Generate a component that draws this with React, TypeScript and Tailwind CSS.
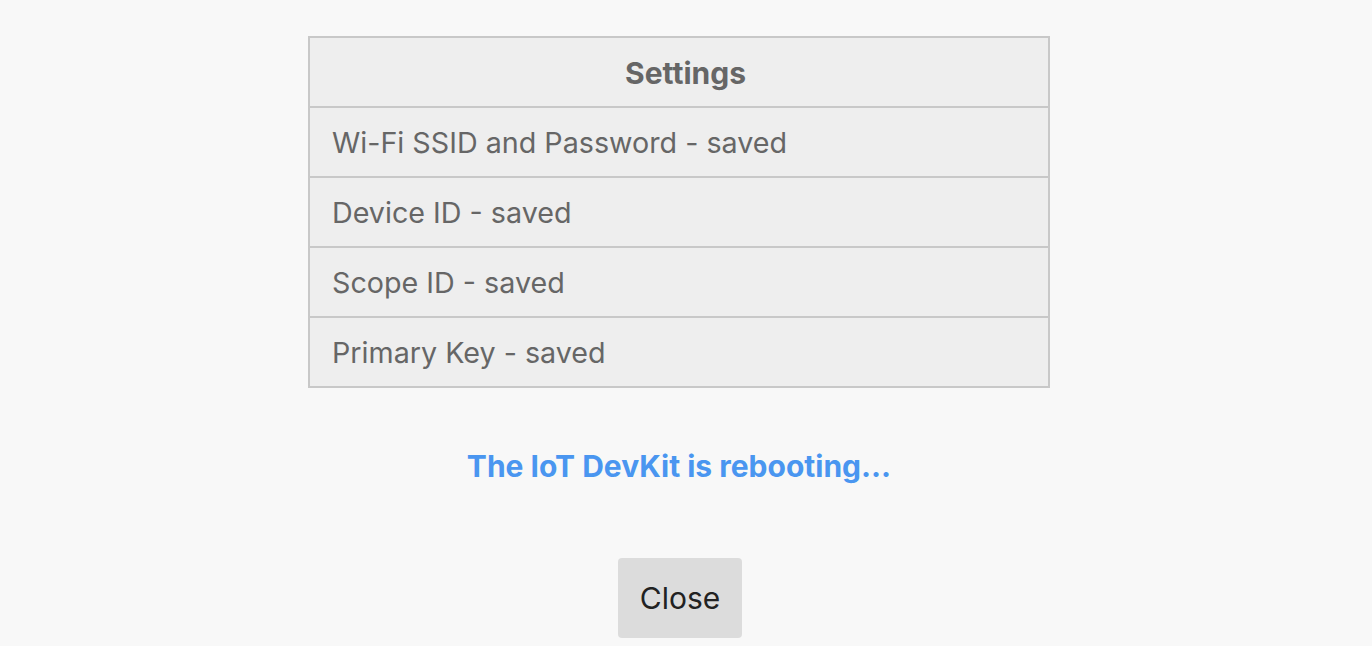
const rows = [
  'Wi-Fi SSID and Password - saved',
  'Device ID - saved',
  'Scope ID - saved',
  'Primary Key - saved',
]

export default function App() {
  return (
    <div className="min-h-screen bg-[#f8f8f8] font-['Inter',sans-serif] text-[#666]">
      <div className="flex flex-col items-center pt-[36px] pr-[14px]">
        <div className="w-[742px] border-2 border-[#c8c8c8] bg-[#eeeeee]">
          <div className="flex h-[68px] items-center justify-center pl-[13px] pt-[2px] text-[30px] font-bold">
            Settings
          </div>
          {rows.map((r) => (
            <div
              key={r}
              className="flex h-[70px] items-center border-t-2 border-[#c8c8c8] px-[22px] pt-[2px] text-[28.7px]"
            >
              {r}
            </div>
          ))}
        </div>
        <div className="mt-[56px] text-[30px] font-bold text-[#4a96f0]">
          The IoT DevKit is rebooting...
        </div>
        <button className="mt-[69px] ml-[2px] h-[80px] w-[124px] rounded-[4px] bg-[#dcdcdc] text-[30px] text-[#222]">
          Close
        </button>
      </div>
    </div>
  )
}
